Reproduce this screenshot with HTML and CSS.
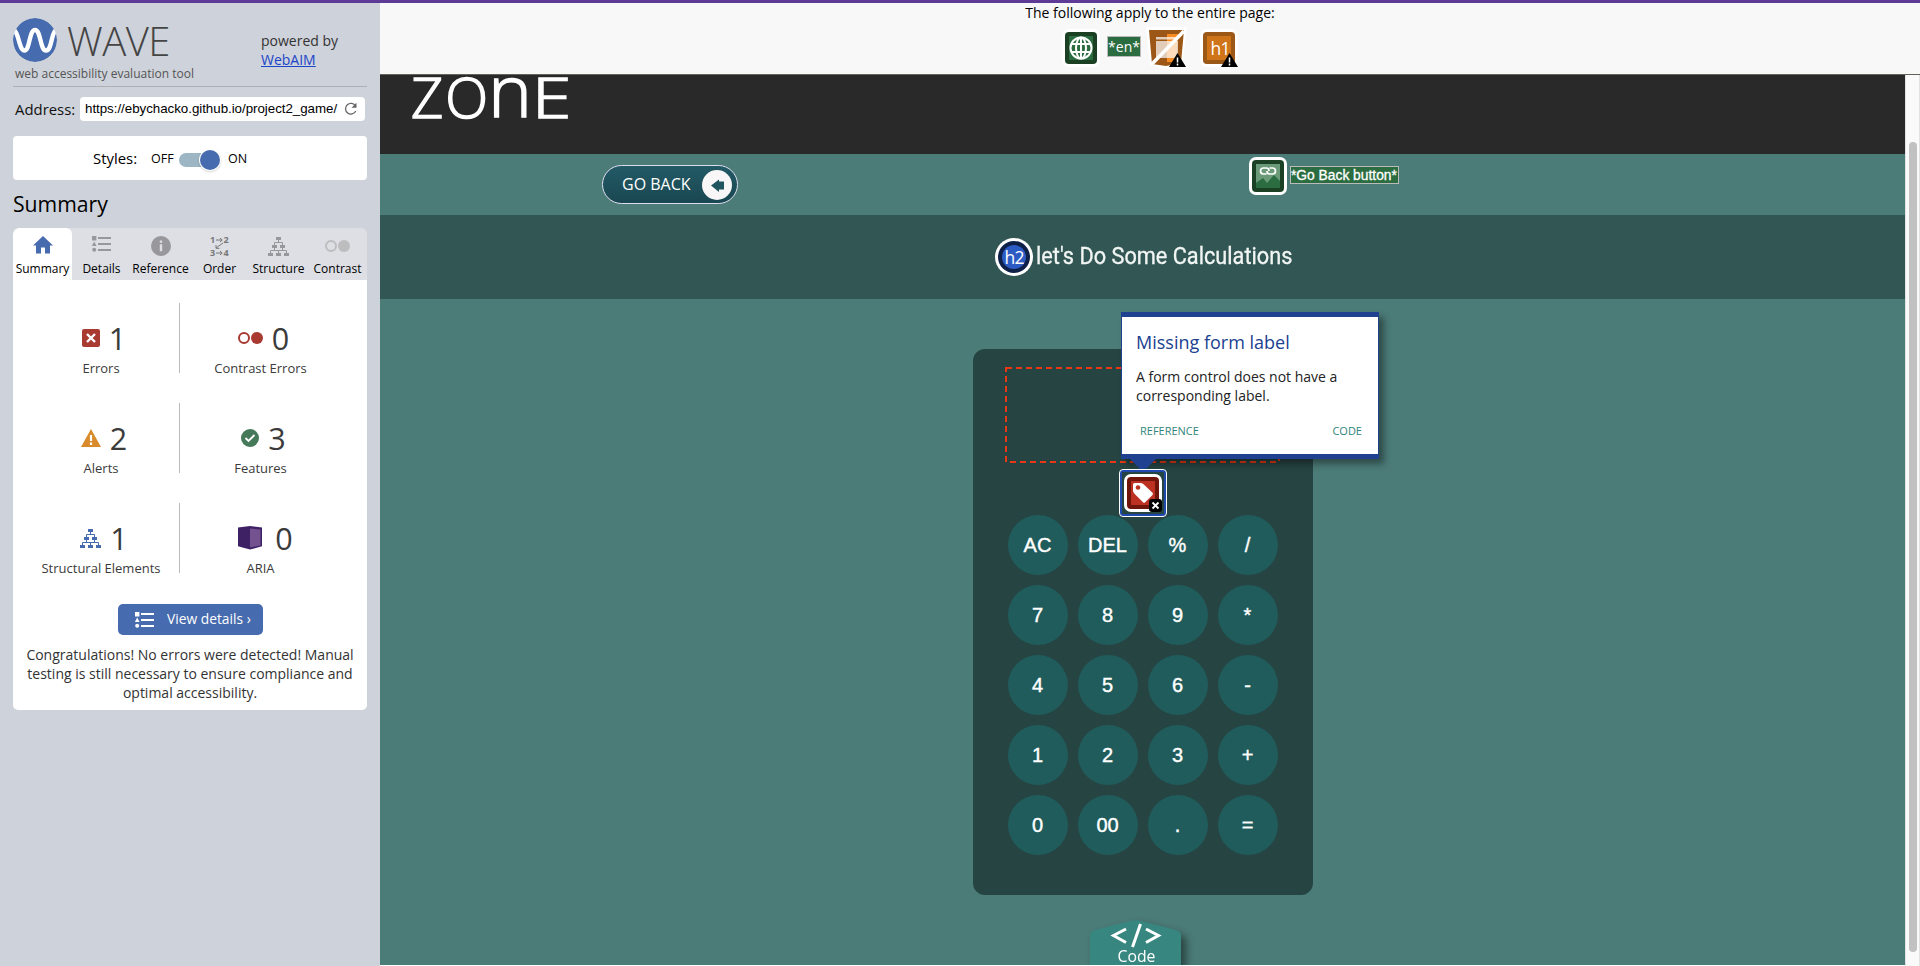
FILE: index.html
```html
<!DOCTYPE html>
<html lang="en">
<head>
<meta charset="utf-8">
<title>WAVE Report</title>
<link rel="stylesheet" href="styles.css">
</head>
<body>
<svg class="defs" width="0" height="0">
  <symbol id="list" viewBox="0 0 19 16"><path d="M0 0h4.400v4.400H0zM2.200 5.600 4.600 10H-.2z"/><circle cx="2.200" cy="13.800" r="2"/><path d="M6 1h13v2H6zM6 7h13v2H6zM6 13h13v2H6z"/></symbol>
  <symbol id="tree" viewBox="0 0 21 19"><path d="M8 0h5v3H8zM4 8h5v3H4zM12 8h5v3h-5zM0 16h5v3H0zM8 16h5v3H8zM16 16h5v3h-5z"/><path d="M10.500 3v3M6.500 8V5.500h8V8M6.500 11v2M14.500 11v2M2.500 16v-2.500h16V16M10.500 13.500V16" fill="none" stroke="currentColor"/></symbol>
  <symbol id="alert" viewBox="0 0 17 14"><path d="M8.500 0 17 14H0z" fill="#000"/><path d="M8.500 4.500v5M8.500 10.500v2" stroke="#fff" stroke-width="1.500"/></symbol>
</svg>
<div class="app">
  <aside class="side">
    <header class="brand">
      <div class="brand-main">
        <div class="logo">
          <svg width="44" height="44" viewBox="0 0 44 44"><defs><clipPath id="disc"><circle cx="22" cy="22" r="22"/></clipPath></defs><g clip-path="url(#disc)"><circle cx="22" cy="22" r="22" fill="#466bae"/><path d="M1 12C6 15 6 32.500 11.500 32.500S16 12 22 12 27 32.500 33 32.500 38 15 43 12" fill="none" stroke="#fff" stroke-width="4.400"/></g></svg>
          <span class="wave">WAVE</span>
        </div>
        <div class="tagline">web accessibility evaluation tool</div>
      </div>
      <div class="powered">powered by<br><a href="#">WebAIM</a></div>
    </header>
    <div class="address">
      <label>Address:</label>
      <div class="url"><span>https://ebychacko.github.io/project2_game/</span>
        <svg width="14" height="14" viewBox="0 0 14 14"><path d="M11.800 9A5.400 5.400 0 1 1 11.600 4" fill="none" stroke="#666" stroke-width="1.300"/><path d="M12.500 .8v5h-5z" fill="#666"/></svg>
      </div>
    </div>
    <div class="styles"><span class="st">Styles:</span><span class="off">OFF</span><span class="toggle"><i></i></span><span class="on">ON</span></div>
    <h2 class="title">Summary</h2>
    <nav class="tabs">
      <div class="tab active"><svg width="20" height="18" viewBox="0 0 20 18"><path d="M10 0 20 9.500h-3V17.500h-5v-6H8v6H3v-8H0z" fill="#466bae"/></svg><span>Summary</span></div>
      <div class="tab"><svg class="up" width="19" height="16"><use href="#list"/></svg><span>Details</span></div>
      <div class="tab"><svg width="20" height="20"><circle cx="10" cy="10" r="10"/><path d="M8.800 4.500h2.400v2.300H8.800zM8.800 8.300h2.400v7H8.800z" fill="#dddfe4"/></svg><span>Reference</span></div>
      <div class="tab"><svg class="order" width="20" height="20" viewBox="0 0 20 20"><text x="0" y="7">1</text><text x="13.500" y="7">2</text><text x="0" y="20">3</text><text x="13.500" y="20">4</text><path d="M6 4h6M10 2l2.200 2L10 6M6 17h6M10 15l2.200 2-2.200 2M13 7l-7 5M6 9v3.300h3.500" fill="none" stroke="#777"/></svg><span>Order</span></div>
      <div class="tab"><svg width="21" height="19"><use href="#tree"/></svg><span>Structure</span></div>
      <div class="tab light"><svg width="25" height="12"><circle cx="6" cy="6" r="5" fill="none" stroke="#bdbdc0" stroke-width="2"/><circle cx="19" cy="6" r="6"/></svg><span>Contrast</span></div>
    </nav>
    <section class="panel">
      <div class="grid">
        <div class="cell"><div class="num"><svg width="18" height="18"><rect width="18" height="18" rx="2" fill="#a83a32"/><path d="m5 5 8 8M13 5l-8 8" stroke="#fff" stroke-width="2.400"/></svg><b>1</b></div><span>Errors</span></div>
        <div class="cell r"><div class="num"><svg width="25" height="12"><circle cx="6" cy="6" r="5" fill="none" stroke="#a83a32" stroke-width="2"/><circle cx="19" cy="6" r="6" fill="#a83a32"/></svg><b>0</b></div><span>Contrast Errors</span></div>
        <div class="cell"><div class="num"><svg width="20" height="18"><path d="M10 0 20 18H0z" fill="#d98b2b"/><path d="M10 6v6M10 13.500v2.500" stroke="#fff" stroke-width="2.200"/></svg><b>2</b></div><span>Alerts</span></div>
        <div class="cell r"><div class="num"><svg width="18" height="18"><circle cx="9" cy="9" r="9" fill="#45795a"/><path d="m4.500 9 3 3 6-6" fill="none" stroke="#fff" stroke-width="1.800"/></svg><b>3</b></div><span>Features</span></div>
        <div class="cell"><div class="num blue"><svg width="21" height="19"><use href="#tree"/></svg><b>1</b></div><span>Structural Elements</span></div>
        <div class="cell r"><div class="num aria"><svg width="24" height="24"><path d="M0 1.500 12 0l12 1.500v18.800L12 23.500 0 20.300z" fill="#3e2065"/><path d="m12 2.500 10.500 1v16L12 21.500z" fill="#73528f"/></svg><b>0</b></div><span>ARIA</span></div>
      </div>
      <button class="view"><svg width="19" height="16"><use href="#list"/></svg><span>View details ›</span></button>
      <p>Congratulations! No errors were detected! Manual testing is still necessary to ensure compliance and optimal accessibility.</p>
    </section>
  </aside>
  <main class="main">
    <div class="pagebar">
      <div class="pb-text">The following apply to the entire page:</div>
      <div class="pb-icons">
        <svg width="38" height="38"><rect width="38" height="38" rx="7" fill="#fff"/><rect x="3" y="3" width="32" height="32" rx="4" fill="#1b4023"/><rect x="7" y="7" width="24" height="24" fill="#2b6d40"/><g fill="none" stroke="#fff" stroke-width="2"><circle cx="19" cy="19" r="10.500"/><ellipse cx="19" cy="19" rx="5" ry="10.500"/><path d="M19 8.500v21M9 15h20M9 23h20"/></g></svg>
        <span class="en">*en*</span>
        <svg class="js" width="41" height="42" viewBox="0 0 41 42"><path d="M0 0h41l-5 40-17 2L4 38z" fill="#fff"/><path d="M3 3h35l-3 33-15 3L6 37z" fill="#9c5716"/><path d="M21 7h11l-2 28h-9z" fill="#f98b23"/><path d="M10 10h21v2.500H10zM10 14h22v17H10z" fill="#fff" opacity=".7"/><path d="M6 37 38 4" stroke="#fff" stroke-width="3.500"/><use href="#alert" x="23" y="26" width="17" height="14"/></svg>
        <svg width="38" height="40"><rect width="38" height="38" rx="7" fill="#fff"/><rect x="3" y="3" width="32" height="32" rx="4" fill="#9b5817"/><rect x="7" y="7" width="24" height="24" fill="#cf7419"/><text class="hx" x="10.500" y="26">h1</text><use href="#alert" x="21" y="24" width="17" height="14"/></svg>
      </div>
    </div>
    <div class="viewport">
      <div class="page">
        <div class="top"><span class="zone"><span>Z</span><span class="o">O</span><span class="n">n</span><span class="e">E</span></span></div>
        <div class="backbar">
          <a class="goback"><span>GO BACK</span><svg width="30" height="30"><circle cx="15" cy="15" r="15" fill="#f8f6f6"/><path d="M9 15.500 17 9.500v2h5v8h-5v2.500z" fill="#205560"/></svg></a>
          <div class="alt"><svg width="38" height="38"><rect width="38" height="38" rx="7" fill="#fff"/><rect x="3" y="3" width="32" height="32" rx="4" fill="#1b4023"/><path d="M7 7h24v24H7z" fill="#6b9a79"/><path d="m7 26 7-5 4 5 7-8 6 6v7H7z" fill="#2b6d40"/><path d="M17.500 17H14.500a3 3 0 0 1 0-6H17.500q2.500 0 2.500 3M20.500 11h3a3 3 0 0 1 0 6h-3q-2.500 0-2.500-3" fill="none" stroke="#fff" stroke-width="1.700"/></svg><span>*Go Back button*</span></div>
        </div>
        <div class="band"><svg width="38" height="38"><circle cx="19" cy="19" r="19" fill="#fff"/><circle cx="19" cy="19" r="16" fill="#0e2048"/><circle cx="19" cy="19" r="12" fill="#2c5bc4"/><text class="hx" x="9.500" y="26">h2</text></svg><h2>let's Do Some Calculations</h2></div>
        <div class="work">
          <div class="calc">
            <svg class="display" width="275" height="96"><rect x="1" y="1" width="273" height="94"/></svg>
            <div class="keys">
              <button>AC</button><button>DEL</button><button>%</button><button>/</button>
              <button>7</button><button>8</button><button>9</button><button>*</button>
              <button>4</button><button>5</button><button>6</button><button>-</button>
              <button>1</button><button>2</button><button>3</button><button>+</button>
              <button>0</button><button>00</button><button>.</button><button>=</button>
            </div>
            <div class="tip">
              <h3>Missing form label</h3>
              <p>A form control does not have a corresponding label.</p>
              <div class="links"><span>REFERENCE</span><span>CODE</span></div>
            </div>
            <div class="focus"><svg width="38" height="38"><rect width="38" height="38" rx="7" fill="#fff"/><rect x="3" y="3" width="32" height="32" rx="4" fill="#70150c"/><rect x="7" y="7" width="24" height="24" fill="#bc3122"/><path d="M9 10.500Q9 9 10.500 9H17l2 .8 9.500 9q1 1 0 2.200l-7.300 7.300q-1.200 1-2.200 0l-9-9L9 17z" fill="#fff"/><circle cx="14" cy="13.500" r="2.300" fill="#bc3122"/><rect x="25" y="25" width="13" height="13" rx="3"/><path d="m28.500 28.500 6 6M34.500 28.500l-6 6" stroke="#fff" stroke-width="1.800"/></svg></div>
          </div>
          <div class="codetab"><svg width="91" height="46" viewBox="0 0 91 46"><path d="M0 46V16Q0 11 5 10L40 1q5.500-1.500 11 0l35 9q5 1 5 6v30z" fill="#388680"/><path d="M36 9 23.500 15.500 36 22.500M56 9l12.500 6.500L56 22.500M50.500 4l-8 23" fill="none" stroke="#fff" stroke-width="3"/></svg><span>Code</span></div>
        </div>
      </div>
      <div class="scroll"><i></i></div>
    </div>
  </main>
</div>
</body>
</html>
```
FILE: styles.css
```css
* { box-sizing: border-box; margin: 0; padding: 0; }
body { width: 1920px; height: 966px; overflow: hidden; font-family: "Open Sans", "Noto Sans", sans-serif; color: #000; }
svg { display: block; flex: none; }
button { border: 0; font: inherit; }
.defs { position: absolute; }
.app { display: flex; height: 966px; border-top: 3px solid #5e3b97; }

/* sidebar */
.side { width: 380px; padding: 15px 13px 0; background: #ced2da; flex: none; }
.brand { display: flex; height: 69px; border-bottom: 1px solid #adb1b5; }
.brand-main { width: 248px; }
.logo { display: flex; align-items: center; height: 44px; gap: 10px; }
.wave { font-size: 40px; font-weight: 300; line-height: 40px; color: #444; white-space: nowrap; letter-spacing: -.5px; padding-top: 1px; }
.tagline { font-size: 12px; line-height: 18px; padding: 3px 0 0 2px; color: #555; white-space: nowrap; }
.powered { padding-top: 13px; font-size: 14px; line-height: 19px; color: #333; }
.powered a { color: #1a45c8; }
.address { display: flex; align-items: center; height: 24px; margin-top: 10px; padding: 0 2px; font-size: 14.9px; }
.address label { width: 65px; color: #111; white-space: nowrap; }
.url { display: flex; align-items: center; width: 285px; height: 24px; padding-left: 5px; background: #fff; border-radius: 4px; font: 13.33px "Liberation Sans", Arial, sans-serif; }
.url span { width: 253px; margin-right: 6px; overflow: hidden; white-space: nowrap; line-height: 20px; letter-spacing: -.03px; }
.styles { display: flex; align-items: center; height: 44px; margin-top: 15px; padding-left: 80px; background: #fff; border-radius: 4px; font-size: 12.5px; white-space: nowrap; }
.st { font-size: 14.9px; width: 58px; }
.off { width: 28px; }
.toggle { display: flex; align-items: center; justify-content: flex-end; width: 41px; height: 14px; margin: 4px 8px 0 0; border-radius: 7px; background: #9cb6c4; }
.toggle i { width: 20px; height: 20px; border-radius: 50%; background: #466bae; box-shadow: 0 0 0 1px #fff, 0 1px 3px #0006; }
.title { font-size: 21.2px; font-weight: 400; line-height: 28px; height: 48px; padding-top: 10px; }
.tabs { display: flex; height: 52px; background: #dddfe4; border-radius: 6px 6px 0 0; overflow: hidden; }
.tab { flex: 1 0 59px; width: 59px; display: grid; grid-template-rows: 36px 16px; justify-items: center; align-items: center; font-size: 12px; line-height: 16px; white-space: nowrap; fill: #98989c; color: #98989c; }
.tab span { color: #000; align-self: start; margin-top: -3px; }
.tab .up { margin-top: -4px; }
.tab.active { background: #fff; border-radius: 6px 6px 0 0; }
.tab.active svg { margin-top: -2px; }
.tab.light { fill: #bdbdc0; }
.order { overflow: visible; }
.order text { font: 700 9px "Open Sans", sans-serif; fill: #777; }
.panel { height: 430px; padding-top: 23px; background: #fff; border-radius: 0 0 5px 5px; }
.grid { display: grid; grid-template-columns: 167px 187px; grid-auto-rows: 70px; row-gap: 30px; }
.cell { display: flex; flex-direction: column; align-items: center; padding: 16px 0 0 10px; border-right: 1px solid #bbb; color: #3b3b3b; font-size: 13px; }
.cell.r { border: 0; padding: 16px 26px 0 0; }
.cell > span { line-height: 18px; margin-top: 2px; white-space: nowrap; }
.num { display: flex; align-items: center; gap: 9px; height: 38px; padding-left: 6px; }
.num.aria { gap: 13px; padding-left: 10px; }
.num b { font-size: 30.5px; font-weight: 400; line-height: 38px; }
.blue svg { fill: #466bae; color: #466bae; }
.view { display: flex; align-items: center; gap: 13px; width: 145px; height: 31px; margin: 31px 0 0 105px; padding-left: 17px; background: #466bae; border-radius: 5px; color: #fff; fill: #fff; font-size: 13.8px; white-space: nowrap; }
.view span { padding-bottom: 2px; }
.panel p { padding: 10px 8px 0; text-align: center; font-size: 14px; line-height: 19px; color: #333; }

/* page-level bar */
.main { flex: 1; display: flex; flex-direction: column; }
.pagebar { height: 72px; background: #f8f8f8; border-bottom: 1px solid #62645a; display: flex; flex-direction: column; align-items: center; }
.pb-text { font-size: 14px; line-height: 20px; white-space: nowrap; }
.pb-icons { display: flex; align-items: flex-start; width: 264px; height: 45px; padding-left: 44px; margin-top: 6px; }
.en { width: 34px; height: 21px; margin: 7px 5px 0 7px; background: #2b6d40; border: 1px solid #bbb; color: #fff; font-size: 14px; line-height: 19px; display: flex; justify-content: center; }
.js { margin: -2px 13px 0 0; }
.hx { font: 17.5px "Open Sans", sans-serif; letter-spacing: -.8px; fill: #fff; }

/* inspected page */
.viewport { flex: 1; display: flex; }
.page { width: 1525px; height: 890px; overflow: hidden; background: #4c7c78; }
.top { height: 79px; background: #292929; padding-left: 31px; }
.zone { display: flex; align-items: flex-start; width: 180px; height: 60px; font: 300 56px/42px "Open Sans", sans-serif; color: #fff; -webkit-text-stroke: 1.5px #fff; }
.o { margin-left: 2px; }
.n { margin: -6px 0 0 1px; font-size: 71px; line-height: 42px; transform: scaleX(1.04); }
.e { margin-left: 1px; transform: scaleX(1.27); transform-origin: 0 0; }
.backbar { display: flex; align-items: flex-start; height: 61px; padding: 11px 0 0 222px; }
.goback { display: flex; align-items: center; width: 136px; height: 39px; padding-left: 19px; border: 1px solid #dde; border-radius: 20px; background: linear-gradient(#225a66, #1a4751); color: #fff; font-size: 16px; white-space: nowrap; }
.goback span { width: 80px; padding-bottom: 2px; }
.alt { display: flex; align-items: center; margin: -8px 0 0 511px; gap: 3px; }
.alt span { width: 109px; height: 18px; margin-top: -2px; border: 1px solid #bbb; background: #2b6d40; color: #fff; font: 13.8px/17px "Liberation Sans", Arial, sans-serif; -webkit-text-stroke: .3px #fff; white-space: nowrap; }
.band { display: flex; height: 84px; padding: 23px 0 0 615px; gap: 3px; background: #325653; }
.band h2 { font: 400 24px/36px Roboto, sans-serif; color: #f1f5f4; white-space: nowrap; transform: scaleX(.905); transform-origin: 0 0; -webkit-text-stroke: .3px #f1f5f4; }
.work { height: 666px; padding: 50px 0 0 593px; }
.calc { position: relative; width: 340px; height: 546px; padding: 18px 0 0 32px; background: #254442; border-radius: 12px; }
.display rect { fill: none; stroke: #e93815; stroke-width: 2; stroke-dasharray: 6 4; }
.keys { display: grid; grid-template-columns: repeat(4, 60px); gap: 10px; padding: 52px 0 0 3px; }
.keys button { height: 60px; border-radius: 50%; background: #215c5c; color: #fff; font: 20px "Liberation Sans", Arial, sans-serif; -webkit-text-stroke: .4px #fff; padding-right: 1px; }
.tip { position: absolute; left: 148px; top: -37px; width: 258px; height: 147px; padding: 15px 14px 0; background: #fff; border: 1px solid #20418f; border-width: 5px 1px; box-shadow: 5px 5px 7px #0006; }
.tip::after { content: ""; position: absolute; left: 8px; bottom: -18px; border: 13px solid transparent; border-top-color: #20418f; border-bottom: 0; }
.tip h3 { font-size: 18px; line-height: 20px; font-weight: 400; color: #20418f; }
.tip p { padding-top: 15px; font-size: 14px; line-height: 19px; color: #222; }
.links { display: flex; justify-content: space-between; padding: 17px 2px 0 4px; font-size: 11px; line-height: 18px; color: #2f857b; }
.focus { position: absolute; left: 146px; top: 120px; width: 48px; height: 48px; padding: 4px; border: 1px solid #fff; border-radius: 4px; background: #254442; box-shadow: inset 0 0 0 2px #2049b0; }
.codetab { display: grid; width: 91px; height: 46px; margin: 25px 0 0 117px; filter: drop-shadow(5px 5px 4px #0007); }
.codetab > * { grid-area: 1 / 1; }
.codetab span { align-self: end; text-align: center; color: #fff; font-size: 15.8px; line-height: 20px; padding-left: 2px; }
.scroll { width: 15px; background: #fafafa; border: 1px solid #e2e2e2; border-width: 0 1px; padding: 67px 0 0 3px; }
.scroll i { display: block; width: 8px; height: 810px; border-radius: 4px; background: #c1c1c1; }
```
